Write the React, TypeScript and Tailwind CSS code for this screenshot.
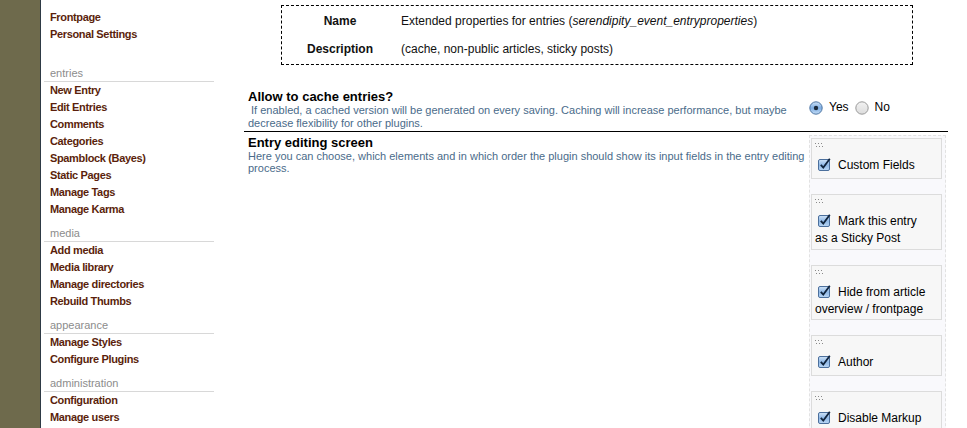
import React from 'react';

const font = { fontFamily: '"Liberation Sans", Arial, sans-serif' };

type Section = { title: string | null; items: string[] };

const sections: Section[] = [
  { title: null, items: ['Frontpage', 'Personal Settings'] },
  {
    title: 'entries',
    items: [
      'New Entry',
      'Edit Entries',
      'Comments',
      'Categories',
      'Spamblock (Bayes)',
      'Static Pages',
      'Manage Tags',
      'Manage Karma',
    ],
  },
  { title: 'media', items: ['Add media', 'Media library', 'Manage directories', 'Rebuild Thumbs'] },
  { title: 'appearance', items: ['Manage Styles', 'Configure Plugins'] },
  { title: 'administration', items: ['Configuration', 'Manage users'] },
];

const fields = [
  { lines: ['Custom Fields'], h: 'h-[41px]' },
  { lines: ['Mark this entry', 'as a Sticky Post'], h: 'h-[56px]' },
  { lines: ['Hide from article', 'overview / frontpage'], h: 'h-[55px]' },
  { lines: ['Author'], h: 'h-[41px]' },
  { lines: ['Disable Markup'], h: 'h-[44px]' },
];

function Checkbox() {
  return (
    <svg width="13" height="13" viewBox="0 0 13 13" className="inline-block align-[-2px]">
      <defs>
        <linearGradient id="cbg" x1="0" y1="0" x2="0" y2="1">
          <stop offset="0" stopColor="#cfe3f7" />
          <stop offset="0.5" stopColor="#8fb8e6" />
          <stop offset="1" stopColor="#b9d6f4" />
        </linearGradient>
      </defs>
      <rect x="0.5" y="1.5" width="11" height="11" rx="1.5" fill="url(#cbg)" stroke="#4b6f9c" />
      <path d="M2.8 6.8 L5.3 9.6 L11.8 0.8" fill="none" stroke="#10243d" strokeWidth="1.8" />
    </svg>
  );
}

function Radio({ checked }: { checked?: boolean }) {
  return (
    <svg width="14" height="14" viewBox="0 0 14 14" className="inline-block">
      <defs>
        <linearGradient id="rbOn" x1="0" y1="0" x2="0" y2="1">
          <stop offset="0" stopColor="#cfe2f6" />
          <stop offset="0.5" stopColor="#7eaee3" />
          <stop offset="1" stopColor="#c4dcf5" />
        </linearGradient>
        <linearGradient id="rbOff" x1="0" y1="0" x2="0" y2="1">
          <stop offset="0" stopColor="#f2f2f2" />
          <stop offset="1" stopColor="#dcdcdc" />
        </linearGradient>
      </defs>
      <circle
        cx="7"
        cy="7"
        r="6.2"
        fill={checked ? 'url(#rbOn)' : 'url(#rbOff)'}
        stroke={checked ? '#4f76a3' : '#9a9a9a'}
      />
      {checked && <circle cx="7" cy="7" r="2.2" fill="#1c2a3a" />}
    </svg>
  );
}

function Handle() {
  return (
    <svg width="8" height="5" viewBox="0 0 8 5" className="block">
      {[0, 3, 6].map((x) => (
        <React.Fragment key={x}>
          <rect x={x} y="0" width="1" height="1" fill="#8a8a8a" />
          <rect x={x + 1} y="3" width="1" height="1" fill="#8a8a8a" />
        </React.Fragment>
      ))}
    </svg>
  );
}

function Sidebar() {
  return (
    <div className="w-[173px] shrink-0 pl-[3px] pt-[9px]">
      {sections.map((s, i) => (
        <div key={i} className={s.title ? (i === 1 ? 'mt-[22px]' : 'mt-[7px]') : ''}>
          {s.title && (
            <div className="h-[17px] border-b border-[#d8d8d8] pl-[6px] text-[11px] leading-[17px] text-[#8c8c8c]">
              {s.title}
            </div>
          )}
          {s.items.map((it) => (
            <div
              key={it}
              className="pl-[6px] text-[11px] font-bold leading-[17px] tracking-[-0.35px] text-[#5b1f0c]"
            >
              {it}
            </div>
          ))}
        </div>
      ))}
    </div>
  );
}

export default function App() {
  return (
    <div className="flex min-h-[428px] w-[967px] overflow-hidden bg-white" style={font}>
      <div className="w-[41px] shrink-0 border-r border-[#2e3a45] bg-[#6e6a4c]" />
      <Sidebar />
      <main className="ml-[30px] w-[704px] shrink-0 pt-[5px]">
        <div className="mx-auto w-[632px] translate-x-[1px] border border-dashed border-black py-px">
          <div className="grid grid-cols-[116px_1fr] text-[12px] leading-[28px] text-[#111]">
            <div className="text-center font-bold">Name</div>
            <div className="pl-[3px]">
              Extended properties for entries (<i>serendipity_event_entryproperties</i>)
            </div>
            <div className="text-center font-bold">Description</div>
            <div className="pl-[3px]">(cache, non-public articles, sticky posts)</div>
          </div>
        </div>

        <div className="mt-[25px] flex border-b border-black pb-[1px]">
          <div className="w-[565px] pl-[4px]">
            <div className="text-[13px] font-bold leading-[14px] text-black">Allow to cache entries?</div>
            <div className="whitespace-nowrap text-[11px] leading-[13px] text-[#4a6b8a]">
              &nbsp;If enabled, a cached version will be generated on every saving. Caching will increase
              performance, but maybe
              <br />
              decrease flexibility for other plugins.
            </div>
          </div>
          <div className="flex items-center gap-[6px] self-start pt-[9px] text-[12px] leading-[17px] text-black">
            <Radio checked />
            <span>Yes</span>
            <Radio />
            <span>No</span>
          </div>
        </div>

        <div className="flex">
          <div className="w-[565px] pl-[4px] pt-[4px]">
            <div className="text-[13px] font-bold leading-[14px] text-black">Entry editing screen</div>
            <div className="whitespace-nowrap text-[11px] leading-[12px] text-[#4a6b8a]">
              Here you can choose, which elements and in which order the plugin should show its input fields in
              the entry editing
              <br />
              process.
            </div>
          </div>
          <div className="pt-[3px]">
            <div className="flex w-[137px] flex-col gap-[15px] border border-dashed border-[#e2e2e2] bg-[#f9f9fc] pb-[20px] pl-px pt-[2px]">
              {fields.map((f) => (
                <div
                  key={f.lines[0]}
                  className={`${f.h} w-[131px] border border-[#dcdcdc] bg-[#f7f7f7] pl-[3px] pt-[4px]`}
                >
                  <Handle />
                  <div className="mt-[9px] text-[12px] leading-[17px] text-black">
                    <span className="ml-[3px] mr-[7px]">
                      <Checkbox />
                    </span>
                    {f.lines[0]}
                    {f.lines[1] && (
                      <>
                        <br />
                        {f.lines[1]}
                      </>
                    )}
                  </div>
                </div>
              ))}
            </div>
          </div>
        </div>
      </main>
    </div>
  );
}
